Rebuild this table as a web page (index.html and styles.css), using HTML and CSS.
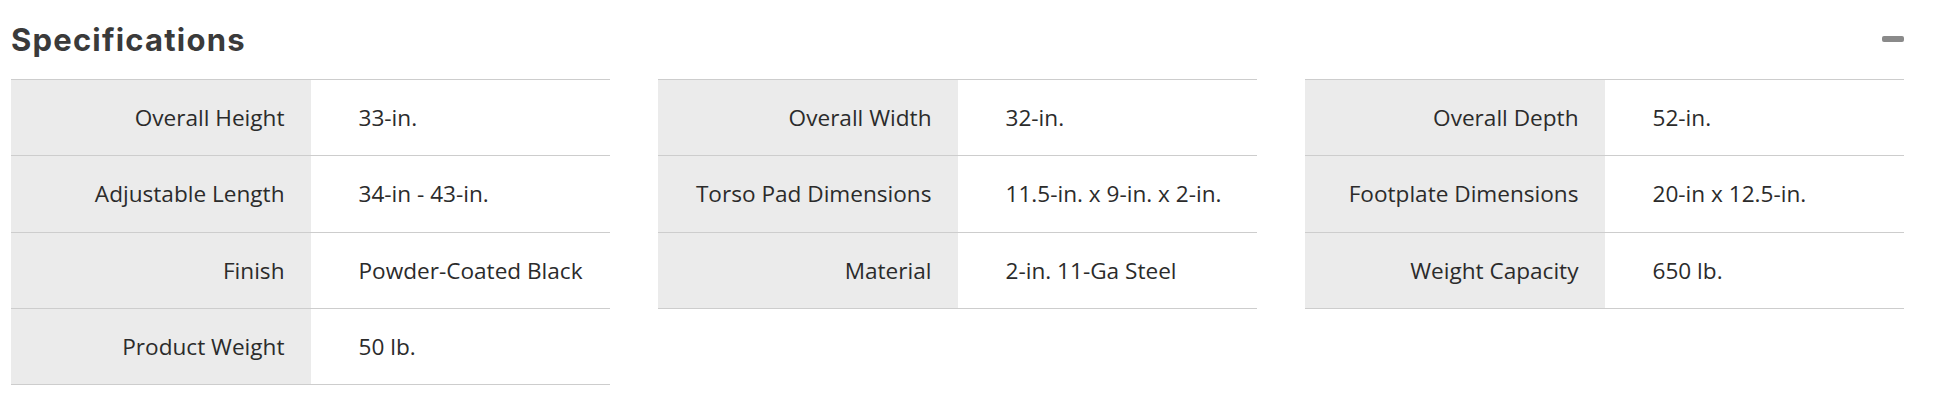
FILE: index.html
```html
<!DOCTYPE html>
<html lang="en">
<head>
<meta charset="utf-8">
<title>Specifications</title>
<link rel="stylesheet" href="styles.css">
</head>
<body>
<section class="specs">
  <header class="specs-head">
    <h2 class="specs-title">Specifications</h2>
    <span class="collapse-icon" aria-label="Collapse"></span>
  </header>
  <div class="specs-grid">
    <dl class="spec-table">
      <div class="spec-row"><dt>Overall Height</dt><dd>33-in.</dd></div>
      <div class="spec-row"><dt>Adjustable Length</dt><dd>34-in - 43-in.</dd></div>
      <div class="spec-row"><dt>Finish</dt><dd>Powder-Coated Black</dd></div>
      <div class="spec-row"><dt>Product Weight</dt><dd>50 lb.</dd></div>
    </dl>
    <dl class="spec-table">
      <div class="spec-row"><dt>Overall Width</dt><dd>32-in.</dd></div>
      <div class="spec-row"><dt>Torso Pad Dimensions</dt><dd>11.5-in. x 9-in. x 2-in.</dd></div>
      <div class="spec-row"><dt>Material</dt><dd>2-in. 11-Ga Steel</dd></div>
    </dl>
    <dl class="spec-table">
      <div class="spec-row"><dt>Overall Depth</dt><dd>52-in.</dd></div>
      <div class="spec-row"><dt>Footplate Dimensions</dt><dd>20-in x 12.5-in.</dd></div>
      <div class="spec-row"><dt>Weight Capacity</dt><dd>650 lb.</dd></div>
    </dl>
  </div>
</section>
</body>
</html>
```
FILE: styles.css
```css
* { box-sizing: border-box; }
html, body { margin: 0; padding: 0; background: #fff; }
body { font-family: "Open Sans", "Liberation Sans", sans-serif; color: #2b2b2b; }

.specs {
  width: 1893px;
  margin-left: 11px;
}

.specs-head {
  display: flex;
  align-items: center;
  justify-content: space-between;
  height: 79px;
  padding-bottom: 1px;
}

.specs-title {
  margin: 0;
  font-family: "Inter", "Noto Sans", sans-serif;
  font-weight: 700;
  font-size: 31px;
  letter-spacing: 1.2px;
  color: #3a3a3a;
}

.collapse-icon {
  display: block;
  width: 22px;
  height: 6px;
  border-radius: 2px;
  background: #8a8a8a;
}

.specs-grid {
  display: grid;
  grid-template-columns: repeat(3, 1fr);
  column-gap: 48px;
  align-items: start;
}

.spec-table {
  margin: 0;
  border-top: 1px solid #cdcdcd;
}

.spec-row {
  display: grid;
  grid-template-columns: 1fr 1fr;
  height: 76.3px;
  border-bottom: 1px solid #cdcdcd;
}

.spec-row dt,
.spec-row dd {
  margin: 0;
  display: flex;
  align-items: center;
  font-size: 22.6px;
  white-space: nowrap;
}

.spec-row dt {
  justify-content: flex-end;
  padding-right: 26px;
  background: #ebebeb;
  text-align: right;
}

.spec-row dd {
  padding-left: 48px;
}
```
